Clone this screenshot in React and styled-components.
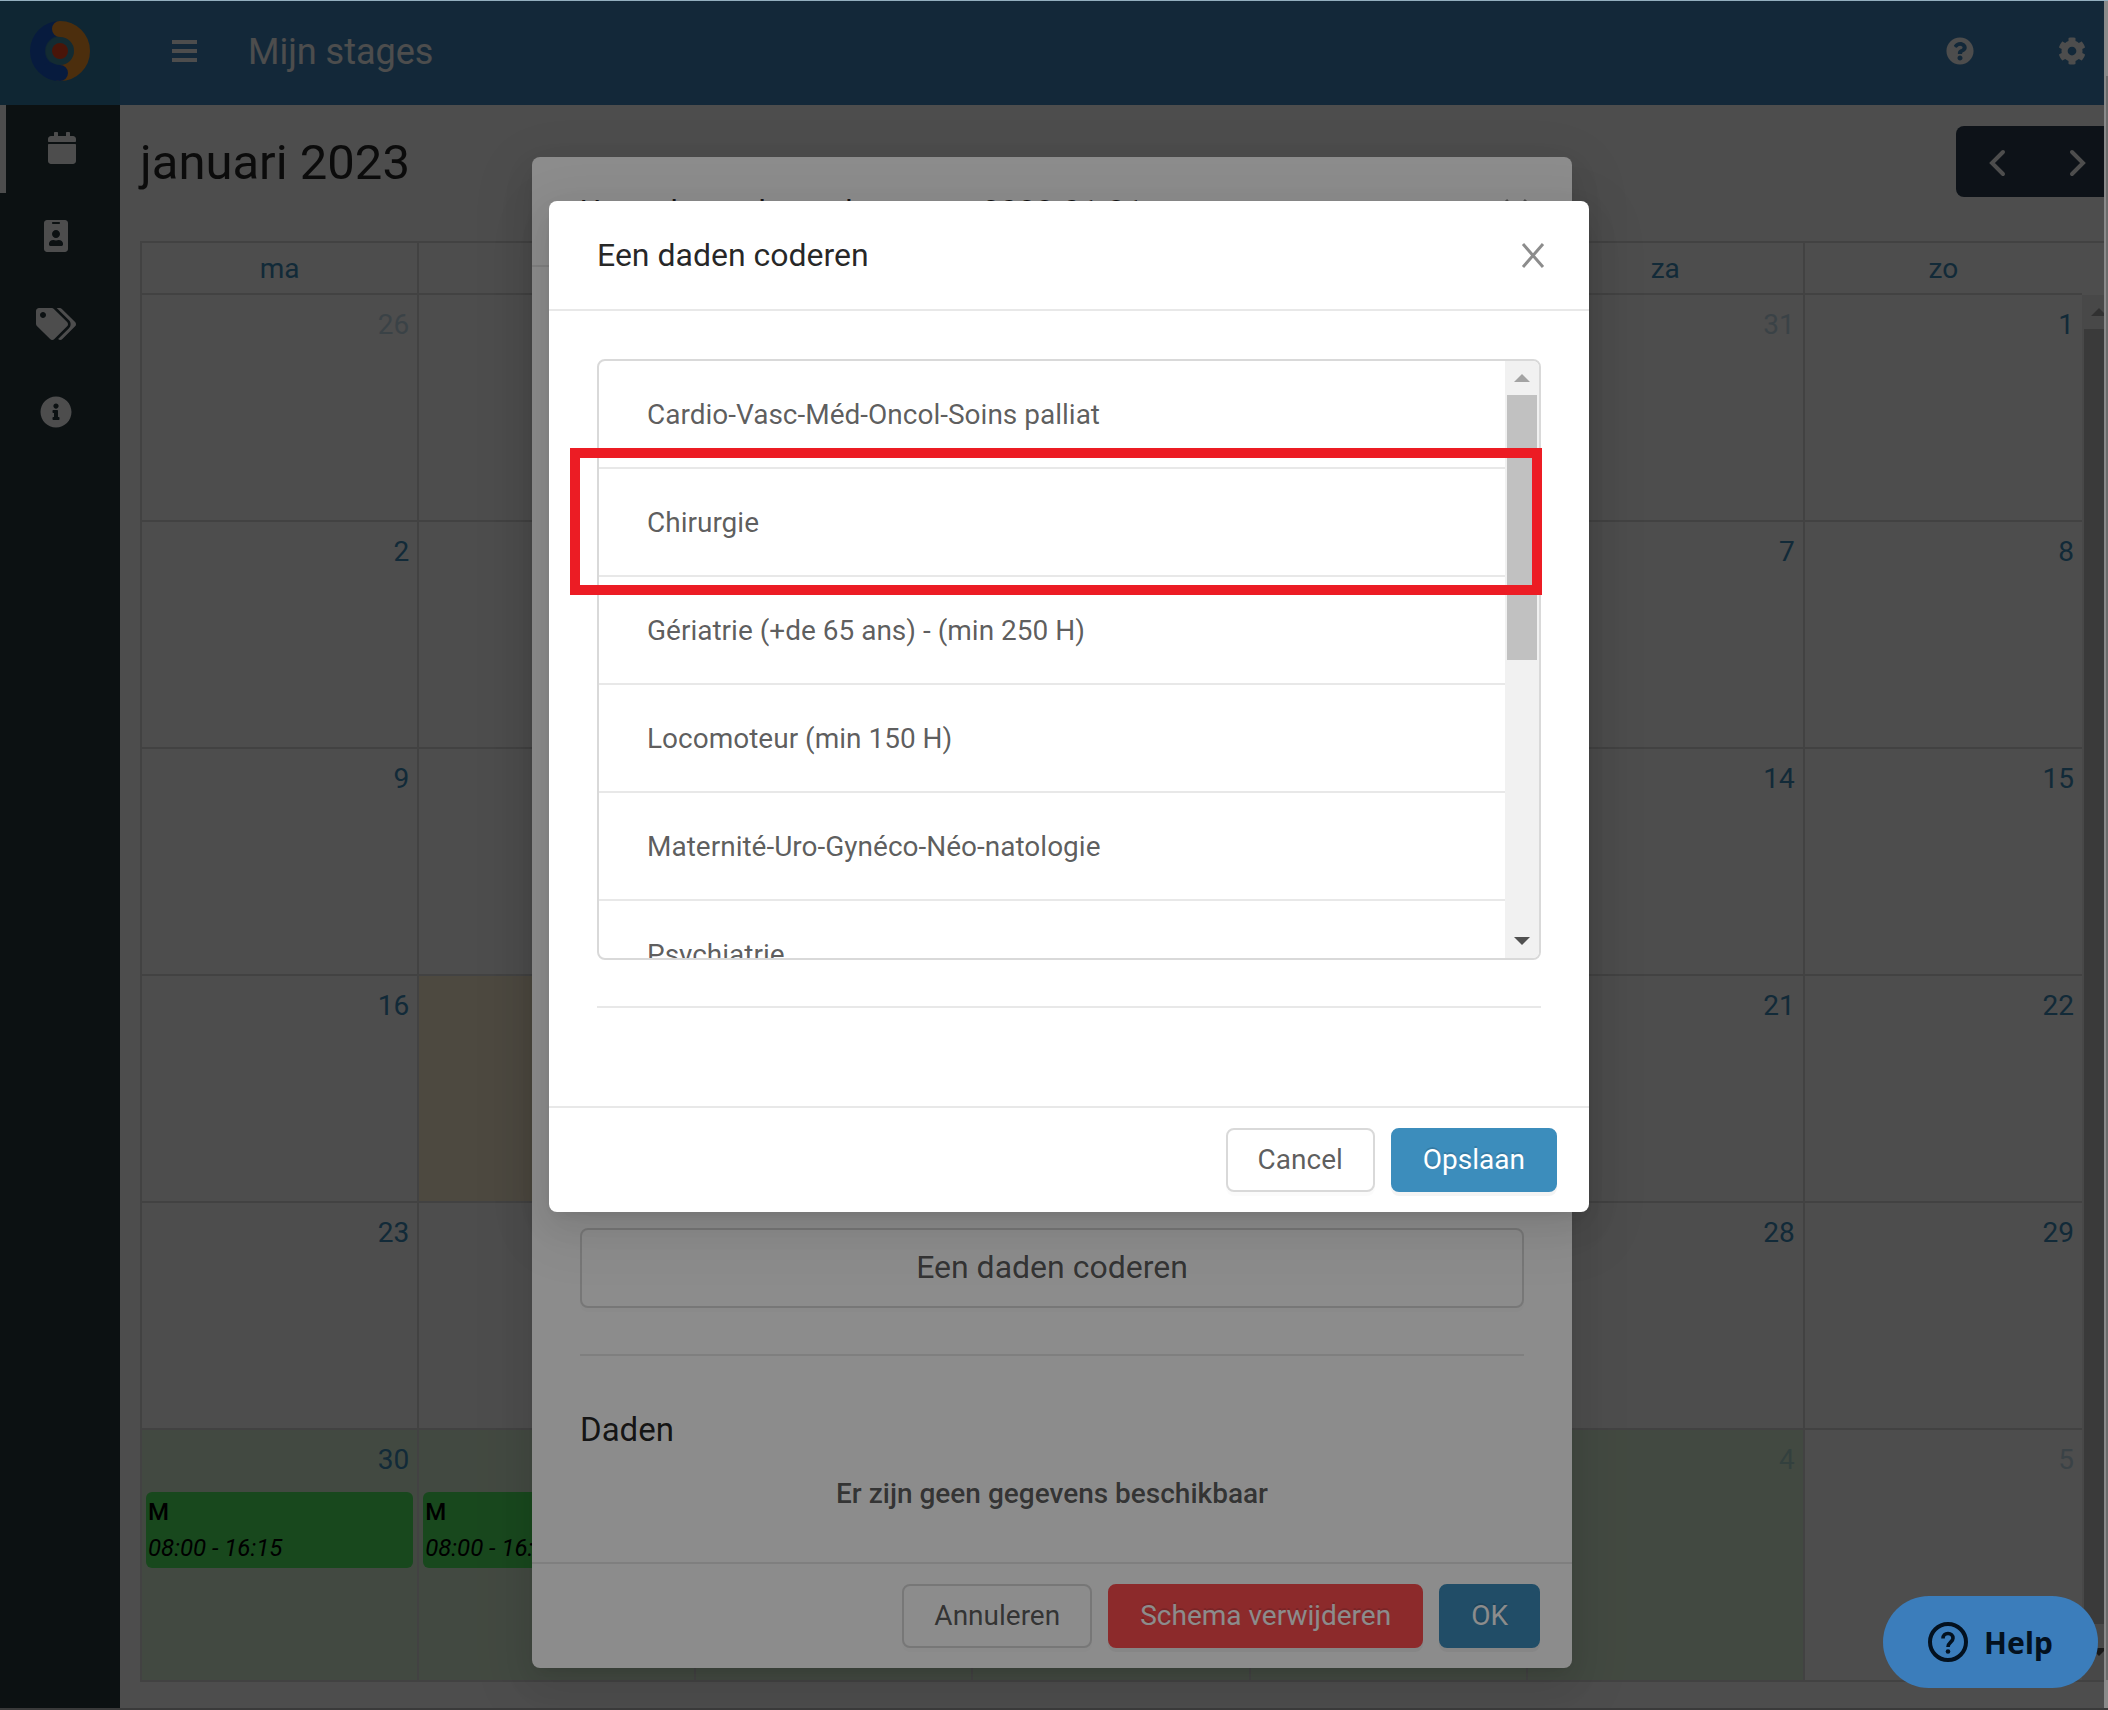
import React, { useState } from 'react';
import styled, { createGlobalStyle, css } from 'styled-components';
import { FaCalendar, FaIdBadge, FaTags, FaInfoCircle, FaQuestionCircle, FaCog } from 'react-icons/fa';

const GlobalStyle = createGlobalStyle`
  * {
    box-sizing: border-box;
  }
  body {
    margin: 0;
    font-family: Roboto, 'Liberation Sans', sans-serif;
    font-size: 28px;
    line-height: 44px;
    color: rgba(0, 0, 0, 0.65);
    background: #fff;
  }
  button {
    font-family: inherit;
    cursor: pointer;
  }
`;

const Root = styled.div`
  display: flex;
  min-height: 100vh;
  border-top: 1px solid #94afbf;
  border-bottom: 2px solid #3a3a3a;
`;

const Screen = styled.div`
  position: relative;
  flex: 1;
  min-width: 0;
  display: flex;
  overflow: hidden;
`;

const EdgeBar = styled.div`
  flex: 0 0 4px;
  display: flex;
  padding: 75px 0 28px 2px;
  background: #8a8a8a;
`;

const EdgeThumb = styled.div`
  flex: 1;
  background: #6b6b6b;
`;

const Sidebar = styled.aside`
  flex: 0 0 120px;
  background: #28393f;
`;

const LogoBox = styled.div`
  display: flex;
  align-items: center;
  justify-content: center;
  height: 104px;
  padding-bottom: 4px;
  background: #367fa9;
`;

const SideLink = styled.a`
  display: flex;
  align-items: center;
  justify-content: center;
  height: 88px;
  padding: 0 8px 2px 0;
  color: #fff;

  ${(props) =>
    props.$active &&
    css`
      padding-right: 2px;
      border-left: 6px solid #fff;
    `}

  svg {
    width: 40px;
    height: 32px;
  }
`;

const Main = styled.div`
  flex: 1;
  min-width: 0;
`;

const Header = styled.header`
  display: flex;
  align-items: center;
  height: 104px;
  padding: 0 18px 4px 52px;
  background: #4088bf;
  color: #fff;
`;

const PlainButton = styled.button`
  display: flex;
  padding: 0;
  border: none;
  background: none;
  color: inherit;
`;

const HeaderTitle = styled.h1`
  flex: 1;
  margin: 0 0 0 51px;
  padding-top: 2px;
  font-size: 36px;
  font-weight: 400;
`;

const HeaderTools = styled.div`
  display: flex;
  gap: 84px;
  font-size: 28px;
`;

const Content = styled.main`
  padding: 21px 0 0 20px;
`;

/* the calendar runs 14px past the right edge of the screen */
const Calendar = styled.section`
  margin-right: -14px;
`;

const CalendarBar = styled.div`
  display: flex;
  align-items: center;
  justify-content: space-between;
  margin-bottom: 44px;
`;

const MonthTitle = styled.h2`
  margin: 0;
  padding-top: 2px;
  font-size: 49px;
  font-weight: 400;
  color: rgba(0, 0, 0, 0.85);
`;

const ArrowGroup = styled.div`
  display: flex;
  overflow: hidden;
  border-radius: 8px;
`;

const ArrowButton = styled.button`
  display: flex;
  align-items: center;
  justify-content: center;
  width: 81px;
  height: 71px;
  padding: 2px 0 0;
  border: none;
  background: #2c3e50;
  color: #fff;
`;

const CalendarBox = styled.div`
  display: flex;
  border: 2px solid #ddd;
`;

const MonthTable = styled.table`
  flex: 1;
  width: 100%;
  table-layout: fixed;
  border-collapse: separate;
  border-spacing: 0;
`;

const WeekdayCell = styled.th`
  height: 52px;
  padding: 4px 0 2px;
  border-right: 2px solid #ddd;
  border-bottom: 2px solid #ddd;
  font-weight: 400;
  color: #3c8dbc;

  &:last-child {
    border-right: none;
  }
`;

const backgrounds = {
  today: '#fff3d6',
  stage: '#ddf5d9',
};

const DayCell = styled.td`
  height: 227px;
  padding: 0;
  vertical-align: top;
  border-right: 2px solid #ddd;
  border-bottom: 2px solid #ddd;
  background: ${(props) => backgrounds[props.$kind] || 'transparent'};

  &:last-child {
    border-right: none;
  }
  tr:last-child > & {
    height: 250px;
    border-bottom: none;
  }
`;

const DayNumber = styled.div`
  padding: 8px 8px 10px;
  text-align: right;
  color: #3c8dbc;
  opacity: ${(props) => (props.$muted ? 0.3 : 1)};
`;

const Shift = styled.div`
  margin: 0 4px;
  padding: 2px;
  border-radius: 6px;
  background: #52ee63;
  color: #000;
  font-size: 24px;
  line-height: 36px;
  white-space: nowrap;
  overflow: hidden;
`;

const ShiftCode = styled.div`
  font-weight: 500;
`;

const ShiftTime = styled.div`
  font-style: italic;
`;

const CalendarScroll = styled.div`
  flex: 0 0 34px;
  display: flex;
  padding-top: 52px;
`;

const Track = styled.div`
  flex: 0 0 34px;
  display: flex;
  flex-direction: column;
  align-items: center;
  padding: 0 2px;
  background: #f1f1f1;
`;

const TrackArrow = styled.div`
  display: flex;
  align-items: center;
  justify-content: center;
  flex: 0 0 ${(props) => props.$size || 34}px;
`;

const Triangle = styled.i`
  border: 8px solid transparent;
  ${(props) =>
    props.$down
      ? css`
          border-top-color: #505050;
          border-bottom: none;
        `
      : css`
          border-bottom-color: #a3a3a3;
          border-top: none;
        `}
`;

const Thumb = styled.div`
  align-self: stretch;
  flex: 1 0 0;
  background: #c1c1c1;
`;

const ThumbRest = styled.div`
  flex: 1 0 0;
`;

const Mask = styled.div`
  position: absolute;
  inset: 0;
  display: flex;
  align-items: flex-start;
  justify-content: center;
  padding-top: ${(props) => props.$top}px;
  padding-left: ${(props) => (props.$scrollGap ? 34 : 0)}px;
  background: rgba(0, 0, 0, 0.45);
`;

const Modal = styled.div`
  width: 1040px;
  max-width: 100%;
  border-radius: 8px;
  background: #fff;
  box-shadow: 0 6px 12px -8px rgba(0, 0, 0, 0.12), 0 12px 32px rgba(0, 0, 0, 0.08),
    0 18px 56px 16px rgba(0, 0, 0, 0.05);
`;

const ModalHeader = styled.div`
  display: flex;
  align-items: center;
  justify-content: space-between;
  height: 110px;
  padding: 0 44px 0 48px;
  border-bottom: 2px solid #e8e8e8;
  color: rgba(0, 0, 0, 0.45);
`;

const ModalTitle = styled.h3`
  margin: 0;
  font-size: 32px;
  font-weight: 400;
  color: rgba(0, 0, 0, 0.85);
`;

const ModalBody = styled.div`
  display: flex;
  flex-direction: column;
  justify-content: flex-end;
  padding: 48px;

  ${(props) =>
    props.$tall &&
    css`
      min-height: 1295px;
      padding-bottom: 46px;
    `}
`;

const ModalFooter = styled.div`
  display: flex;
  justify-content: flex-end;
  gap: 16px;
  height: 106px;
  padding: 20px 32px;
  border-top: 2px solid #e8e8e8;
`;

const Button = styled.button`
  height: 64px;
  padding: 0 30px 2px;
  border: 2px solid #d9d9d9;
  border-radius: 8px;
  background: #fff;
  color: rgba(0, 0, 0, 0.65);
  font-size: 28px;
  box-shadow: 0 4px 0 rgba(0, 0, 0, 0.015);

  ${(props) =>
    props.$fill &&
    css`
      border-color: ${props.$fill};
      background: ${props.$fill};
      color: #fff;
      text-shadow: 0 -2px 0 rgba(0, 0, 0, 0.12);
      box-shadow: 0 4px 0 rgba(0, 0, 0, 0.045);
    `}
  ${(props) =>
    props.$large &&
    css`
      height: 80px;
      font-size: 32px;
    `}
`;

const Divider = styled.hr`
  width: 100%;
  height: 2px;
  margin: 46px 0 50px;
  border: none;
  background: #e8e8e8;
`;

const SectionTitle = styled.h4`
  margin: 0 0 18px;
  font-size: 33px;
  font-weight: 400;
  line-height: 48px;
  color: rgba(0, 0, 0, 0.85);
`;

const EmptyText = styled.p`
  margin: 0;
  text-align: center;
  font-weight: 500;
`;

const ListArea = styled.div`
  position: relative;
`;

const ListBox = styled.div`
  display: flex;
  height: 601px;
  overflow: hidden;
  border: 2px solid #d9d9d9;
  border-radius: 8px;
`;

const List = styled.ul`
  flex: 1;
  margin: 0;
  padding: 0;
  list-style: none;
`;

const ListItem = styled.li`
  padding: 32px 48px 30px;
  border-bottom: 2px solid #e8e8e8;
`;

const Highlight = styled.div`
  position: absolute;
  top: 89px;
  left: -27px;
  right: -1px;
  height: 147px;
  border: 10px solid #ec1c24;
  pointer-events: none;
`;

const HelpButton = styled.button`
  position: absolute;
  right: 6px;
  bottom: 20px;
  display: flex;
  align-items: center;
  justify-content: center;
  gap: 16px;
  min-width: 215px;
  height: 92px;
  padding: 0 42px;
  border: none;
  border-radius: 46px;
  background: #3b7dbb;
  color: #03111f;
  font-family: 'Noto Sans', 'Open Sans', sans-serif;
  font-size: 30px;
  font-weight: 700;
`;

const Logo = () => (
  <svg width="60" height="60" viewBox="0 0 60 60" fill="none">
    <circle cx="30" cy="30" r="14" fill="#4290a8" />
    <path d="M30 7.5a22.5 22.5 0 0 0 0 45" stroke="#1a5bd0" strokeWidth="15" />
    <path d="M30 8a22 22 0 0 1 0 44" stroke="#fb9a2f" strokeWidth="16" strokeLinecap="round" />
    <path d="M20 49.6A22 22 0 0 0 30 52" stroke="#1a5bd0" strokeWidth="16" strokeLinecap="round" />
    <circle cx="30" cy="30" r="8" fill="#f5481f" />
  </svg>
);

const MenuIcon = () => (
  <svg width="25" height="22" viewBox="0 0 25 22" fill="currentColor">
    <path d="M0 0h25v4H0zM0 9h25v4H0zM0 18h25v4H0z" />
  </svg>
);

const CloseIcon = () => (
  <svg width="24" height="26" viewBox="0 0 24 26" fill="none" stroke="currentColor" strokeWidth="3">
    <path d="M2 2l20 23M22 2L2 25" />
  </svg>
);

const Chevron = ({ d }) => (
  <svg width="28" height="28" viewBox="0 0 28 28" fill="none" stroke="currentColor" strokeWidth="4" strokeLinecap="round">
    <path d={d} />
  </svg>
);

const HelpIcon = () => (
  <svg width="40" height="40" viewBox="0 0 40 40" fill="none" stroke="currentColor">
    <circle cx="20" cy="20" r="18" strokeWidth="4" />
    <path d="M15 16.500c0-3 2-5 5-5s5 2 5 4.800c0 3.700-5 4.200-5 8.700" strokeWidth="3.600" />
    <circle cx="20" cy="29.500" r="2.300" fill="currentColor" stroke="none" />
  </svg>
);

const weekdays = ['ma', 'di', 'wo', 'do', 'vr', 'za', 'zo'];

const weeks = [
  [26, 27, 28, 29, 30, 31, 1],
  [2, 3, 4, 5, 6, 7, 8],
  [9, 10, 11, 12, 13, 14, 15],
  [16, 17, 18, 19, 20, 21, 22],
  [23, 24, 25, 26, 27, 28, 29],
  [30, 31, 1, 2, 3, 4, 5],
];

const codes = [
  'Cardio-Vasc-Méd-Oncol-Soins palliat',
  'Chirurgie',
  'Gériatrie (+de 65 ans) - (min 250 H)',
  'Locomoteur (min 150 H)',
  'Maternité-Uro-Gynéco-Néo-natologie',
  'Psychiatrie',
];

const sideLinks = [
  { name: 'Stages', icon: FaCalendar },
  { name: 'Profiel', icon: FaIdBadge },
  { name: 'Labels', icon: FaTags },
  { name: 'Info', icon: FaInfoCircle },
];

const isOtherMonth = (week, day) => (week === 0 && day > 20) || (week === 5 && day < 20);

const dayKind = (week, col) => {
  if (week === 3 && col === 1) return 'today';
  if (week === 5 && col < 6) return 'stage';
  return null;
};

const MonthView = () => (
  <CalendarBox>
    <MonthTable>
      <thead>
        <tr>
          {weekdays.map((name) => (
            <WeekdayCell key={name} scope="col">{name}</WeekdayCell>
          ))}
        </tr>
      </thead>
      <tbody>
        {weeks.map((days, week) => (
          <tr key={week}>
            {days.map((day, col) => (
              <DayCell key={day} $kind={dayKind(week, col)}>
                <DayNumber $muted={isOtherMonth(week, day)}>{day}</DayNumber>
                {week === 5 && col < 2 && (
                  <Shift>
                    <ShiftCode>M</ShiftCode>
                    <ShiftTime>08:00 - 16:15</ShiftTime>
                  </Shift>
                )}
              </DayCell>
            ))}
          </tr>
        ))}
      </tbody>
    </MonthTable>
    <CalendarScroll>
      <Track>
        <TrackArrow><Triangle /></TrackArrow>
        <Thumb />
        <TrackArrow $size={56}><Triangle $down /></TrackArrow>
      </Track>
    </CalendarScroll>
  </CalendarBox>
);

const App = () => {
  const [codeOpen, setCodeOpen] = useState(true);
  const closeCode = () => setCodeOpen(false);

  return (
    <Root>
      <GlobalStyle />
      <Screen>
        <Sidebar>
          <LogoBox><Logo /></LogoBox>
          <nav>
            {sideLinks.map(({ name, icon: Icon }, i) => (
              <SideLink key={name} href="#" aria-label={name} $active={i === 0}>
                <Icon />
              </SideLink>
            ))}
          </nav>
        </Sidebar>
        <Main>
          <Header>
            <PlainButton aria-label="Menu"><MenuIcon /></PlainButton>
            <HeaderTitle>Mijn stages</HeaderTitle>
            <HeaderTools>
              <PlainButton aria-label="Vragen"><FaQuestionCircle size={28} /></PlainButton>
              <PlainButton aria-label="Instellingen"><FaCog size={28} /></PlainButton>
            </HeaderTools>
          </Header>
          <Content>
            <Calendar>
              <CalendarBar>
                <MonthTitle>januari 2023</MonthTitle>
                <ArrowGroup>
                  <ArrowButton aria-label="Vorige maand"><Chevron d="M20 3L9 14l11 11" /></ArrowButton>
                  <ArrowButton aria-label="Volgende maand"><Chevron d="M8 3l11 11L8 25" /></ArrowButton>
                </ArrowGroup>
              </CalendarBar>
              <MonthView />
            </Calendar>
          </Content>
        </Main>

        <Mask $top={156}>
          <Modal role="dialog">
            <ModalHeader>
              <ModalTitle>Uur schema bewerken voor: 2023-01-31</ModalTitle>
              <PlainButton aria-label="Sluiten"><CloseIcon /></PlainButton>
            </ModalHeader>
            <ModalBody $tall>
              <Button $large onClick={() => setCodeOpen(true)}>Een daden coderen</Button>
              <Divider />
              <SectionTitle>Daden</SectionTitle>
              <EmptyText>Er zijn geen gegevens beschikbaar</EmptyText>
            </ModalBody>
            <ModalFooter>
              <Button>Annuleren</Button>
              <Button $fill="#ff4d4f">Schema verwijderen</Button>
              <Button $fill="#3c8dbc">OK</Button>
            </ModalFooter>
          </Modal>
        </Mask>

        {codeOpen && (
          <Mask $top={200} $scrollGap>
            <Modal role="dialog">
              <ModalHeader>
                <ModalTitle>Een daden coderen</ModalTitle>
                <PlainButton aria-label="Sluiten" onClick={closeCode}><CloseIcon /></PlainButton>
              </ModalHeader>
              <ModalBody>
                <ListArea>
                  <ListBox>
                    <List>
                      {codes.map((code) => (
                        <ListItem key={code}>{code}</ListItem>
                      ))}
                    </List>
                    <Track>
                      <TrackArrow><Triangle /></TrackArrow>
                      <Thumb />
                      <ThumbRest />
                      <TrackArrow><Triangle $down /></TrackArrow>
                    </Track>
                  </ListBox>
                  <Highlight />
                </ListArea>
                <Divider />
              </ModalBody>
              <ModalFooter>
                <Button onClick={closeCode}>Cancel</Button>
                <Button $fill="#3c8dbc">Opslaan</Button>
              </ModalFooter>
            </Modal>
          </Mask>
        )}

        <HelpButton>
          <HelpIcon />
          Help
        </HelpButton>
      </Screen>
      <EdgeBar><EdgeThumb /></EdgeBar>
    </Root>
  );
};

export default App;
